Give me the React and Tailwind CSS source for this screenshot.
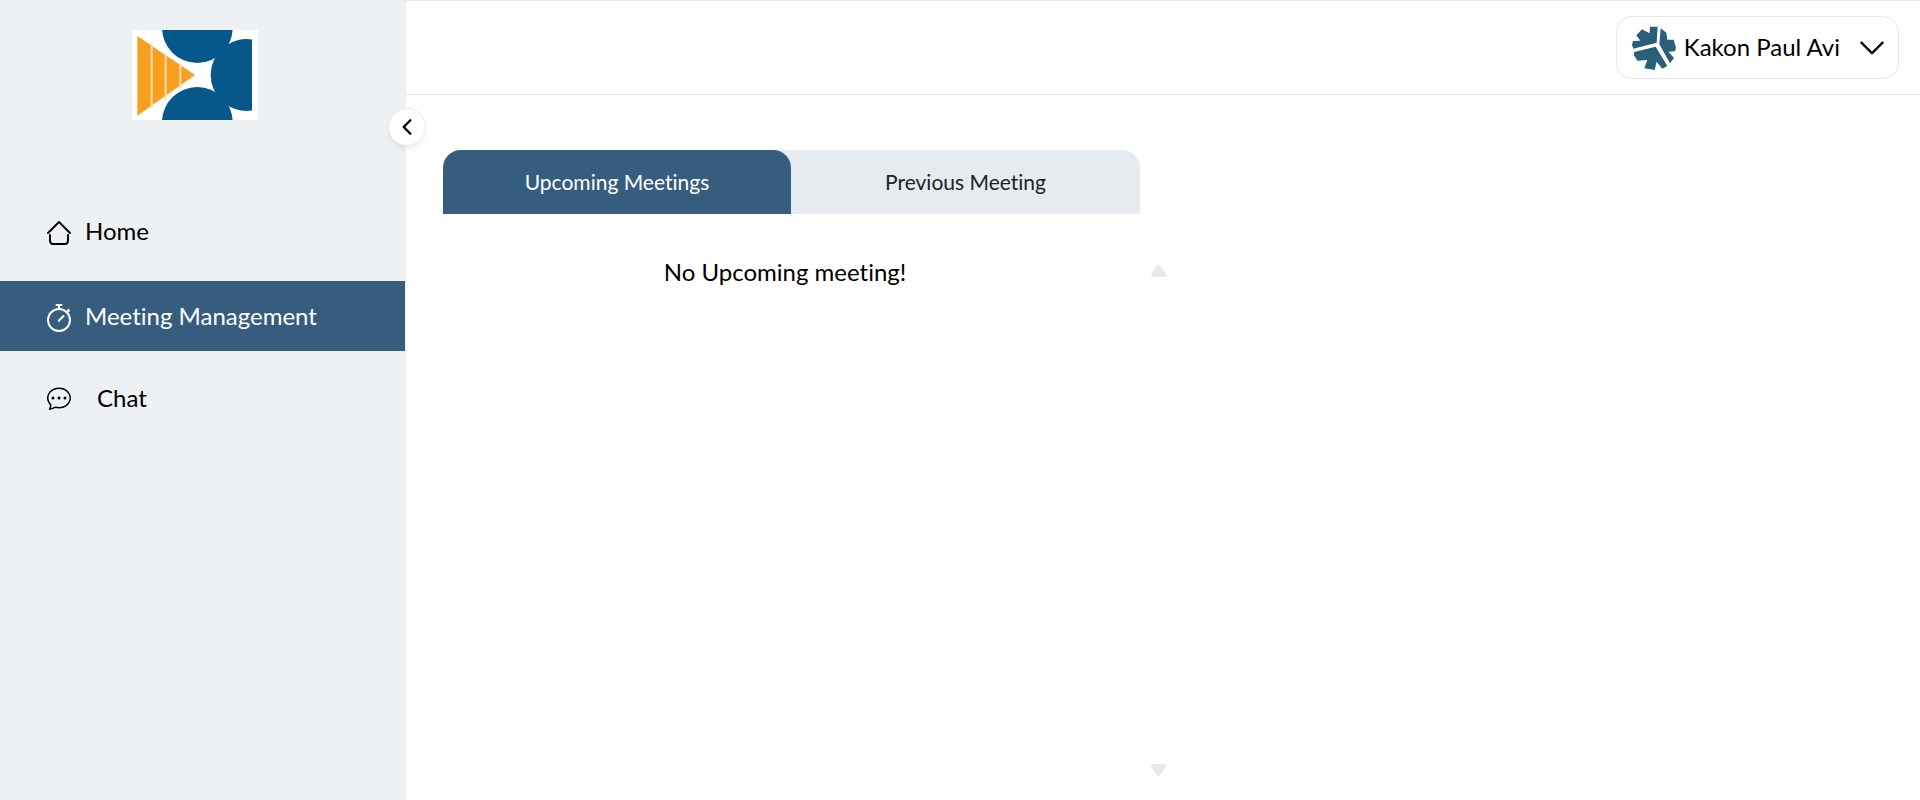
import { BsChatDots, BsChevronDown, BsChevronLeft } from "react-icons/bs";

function Logo() {
  return (
    <svg viewBox="36 30 378 270" className="h-[90px] w-[126px] bg-white" role="img" aria-label="Company logo">
      <g fill="#07588a">
        <circle cx="232" cy="23" r="106" />
        <circle cx="232" cy="307" r="106" />
        <path d="M396 58.200A108 108 0 1 0 396 271.800Z" />
      </g>
      <path d="M52 48L225 165L52 287Z" fill="#f89f20" />
      <path d="M95 70V265M137 100V240M181 130V205" stroke="#fdddae" strokeWidth="6" />
    </svg>
  );
}

function HomeIcon() {
  return (
    <svg viewBox="0 0 28 28" className="size-7" fill="none" stroke="currentColor" strokeWidth="2" strokeLinecap="round" strokeLinejoin="round" aria-hidden="true">
      <path d="M3 16L14 5L25 16" />
      <path d="M5 18V23Q5 27 8 27H20Q23 27 23 23V18" />
    </svg>
  );
}

function StopwatchIcon() {
  return (
    <svg viewBox="0 0 28 32" className="h-8 w-7" fill="none" stroke="currentColor" strokeWidth="2" aria-hidden="true">
      <circle cx="14" cy="20" r="11" />
      <path d="M14 9V5M22 12L24 10" />
      <path d="M11.500 5H16.500M13.800 20.700L18.500 16" strokeLinecap="round" />
      <path d="M23.200 9.500L24.500 10.800" strokeLinecap="round" strokeWidth="1.5" />
    </svg>
  );
}

function Avatar() {
  return (
    <svg viewBox="0 0 132 132" className="size-11" aria-hidden="true">
      <path
        fill="#2b5f79"
        d="M54 2H77L74 50L4 68L0 57L3 45L25 44L13 28L30 10L53 22ZM86 7L103 20L106 41L125 41L132 65L129 76L109 77L126 96L114 112L82 55ZM6 78L71 62L106 120L91 128L74 107L68 132L37 127L46 102L16 104L6 88Z"
      />
    </svg>
  );
}

function NavItem({ icon, label, active, wide }) {
  return (
    <a
      href="#"
      aria-current={active ? "page" : undefined}
      className={`flex h-[70px] items-center pl-[45px] ${wide ? "gap-6" : "gap-3"} ${active ? "bg-[#365d7e] text-white" : "text-black"}`}
    >
      <span className="flex w-7 justify-center">{icon}</span>
      <span>{label}</span>
    </a>
  );
}

export default function App() {
  return (
    <div className="flex min-h-screen bg-white font-['Lato',sans-serif] text-2xl text-black [font-variant-ligatures:none]">
      <aside className="relative w-[406px] shrink-0 border-r border-[#edf1f4] bg-[#edf1f4]">
        <div className="flex justify-center pt-[30px] pr-4">
          <Logo />
        </div>
        <button
          type="button"
          aria-label="Collapse sidebar"
          className="absolute top-[108px] -right-[21px] flex size-[38px] items-center justify-center rounded-full border border-[#e6ebef] bg-white shadow-md shadow-black/5"
        >
          <BsChevronLeft className="size-[18px]" strokeWidth="1" />
        </button>
        <nav className="flex flex-col gap-3 pt-[76px]">
          <NavItem icon={<HomeIcon />} label="Home" />
          <div className="pt-[3px]">
            <NavItem icon={<StopwatchIcon />} label="Meeting Management" active />
          </div>
          <NavItem icon={<BsChatDots className="size-6" />} label="Chat" wide />
        </nav>
      </aside>

      <div className="flex min-w-0 flex-1 flex-col">
        <header className="flex h-[95px] items-center justify-end border-y border-[#e8e8e8] pr-[21px]">
          <button type="button" className="flex h-[63px] items-center rounded-2xl border border-[#e8e8e8] pr-3 pl-[15px]">
            <Avatar />
            <span className="ml-2 pb-0.5">Kakon Paul Avi</span>
            <BsChevronDown className="ml-[18px] size-7" strokeWidth="0.5" />
          </button>
        </header>
        <main className="flex flex-1 flex-col pt-[55px] pl-[37px]">
          <div role="tablist" className="flex h-16 w-[697px] rounded-t-[18px] bg-[#e6ebef] text-[21px]">
            <button type="button" role="tab" aria-selected="true" className="w-[348px] rounded-t-[18px] bg-[#365d7e] text-white">
              Upcoming Meetings
            </button>
            <button type="button" role="tab" aria-selected="false" className="flex-1 text-[#222]">
              Previous Meeting
            </button>
          </div>
          <section className="flex w-[723px] flex-1 justify-between pt-10 pb-6">
            <p className="flex-1 pt-0.5 pr-6 text-center">No Upcoming meeting!</p>
            <div className="flex flex-col justify-between pt-[11px]" aria-hidden="true">
              <svg viewBox="0 0 15 12" className="h-3 w-[15px]" fill="#e9e9e9" stroke="#e9e9e9" strokeWidth="4" strokeLinejoin="round">
                <path d="M7.500 2L13 10H2Z" />
              </svg>
              <svg viewBox="0 0 15 12" className="h-3 w-[15px]" fill="#e9e9e9" stroke="#e9e9e9" strokeWidth="4" strokeLinejoin="round">
                <path d="M7.500 10L13 2H2Z" />
              </svg>
            </div>
          </section>
        </main>
      </div>
    </div>
  );
}
